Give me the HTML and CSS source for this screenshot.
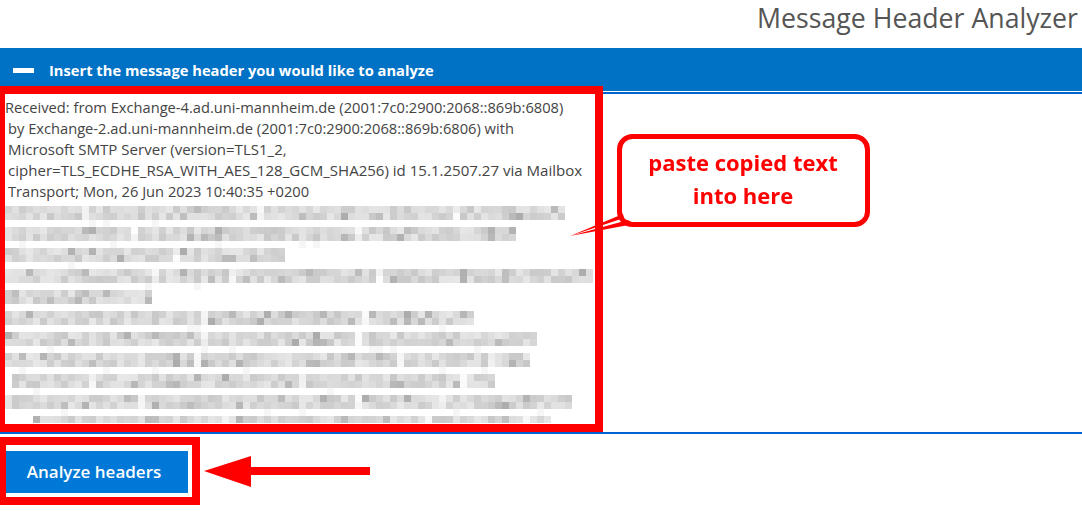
FILE: index.html
```html
<!DOCTYPE html>
<html lang="en">
<head>
<meta charset="utf-8">
<title>Message Header Analyzer</title>
<link rel="stylesheet" href="styles.css">
</head>
<body>
<header class="title-row"><h1 class="title">Message Header Analyzer</h1></header>
<section class="panel">
  <div class="panel-head">
    <span class="minus"></span>
    <span class="panel-title">Insert the message header you would like to analyze</span>
  </div>
  <div class="input-area">
    <div class="header-text">
      <div class="first-line">Received: from Exchange-4.ad.uni-mannheim.de (2001:7c0:2900:2068::869b:6808)</div>
      <div>by Exchange-2.ad.uni-mannheim.de (2001:7c0:2900:2068::869b:6806) with</div>
      <div class="wide-line">Microsoft SMTP Server (version=TLS1_2,</div>
      <div class="wide-line">cipher=TLS_ECDHE_RSA_WITH_AES_128_GCM_SHA256) id 15.1.2507.27 via Mailbox</div>
      <div>Transport; Mon, 26 Jun 2023 10:40:35 +0200</div>
    </div>
    <canvas id="mosaic" class="mosaic" width="595" height="217"></canvas>
  </div>
</section>
<div class="actions"><button class="analyze" type="button">Analyze headers</button></div>

<div class="mark mark-input"></div>
<div class="mark mark-button"></div>

<div class="callout">
  <svg class="callout-shape" width="310" height="110" viewBox="0 0 310 110">
    <rect x="59.500" y="5.500" width="248" height="88" rx="13" ry="13" fill="#fff" stroke="#f00" stroke-width="5"/>
    <path d="M10 105 L63 83 L64 87 Z" fill="#f00"/>
    <path d="M10 105 L68 89 L74 93 Z" fill="#f00"/>
  </svg>
  <div class="callout-text">paste copied text<br>into here</div>
</div>

<svg class="arrow" width="170" height="34" viewBox="0 0 170 34">
  <path d="M0 16 L47 1 V12 H166 V20 H47 V32 Z" fill="#f00"/>
</svg>
<script src="script.js"></script>
</body>
</html>
```

FILE: styles.css
```css
* { box-sizing: border-box; }
html, body { margin: 0; padding: 0; background: #fff; }
body { position: relative; width: 1082px; height: 521px; overflow: hidden; font-family: "Open Sans", "Noto Sans", sans-serif; color: #444; }
.title-row { height: 48px; display: flex; justify-content: flex-end; padding-right: 4px; }
.title { margin: 0; font-size: 26.7px; font-weight: 400; line-height: 36px; color: #555; }
.panel { border-bottom: 2px solid #0063d1; height: 386px; display: flex; flex-direction: column; }
.panel-head { height: 46px; background: #0072c6; border-bottom: 2px solid #0063d1; display: flex; align-items: center; padding: 1px 0 0 13px; gap: 15px; position: relative; }
.panel-head::after { content: ""; position: absolute; left: 0; right: 0; bottom: 0; height: 1px; background: #fff; }
.minus { width: 21px; height: 5px; background: #fff; }
.panel-title { color: #fff; font-size: 14.7px; font-weight: 700; padding-bottom: 2px; }
.input-area { flex: 1; overflow: hidden; padding: 3px 0 0 0; }
.header-text { font-size: 14.68px; line-height: 21px; padding-left: 8px; color: #444; white-space: nowrap; }
.first-line { margin-left: -3px; }
.wide-line { font-size: 15.05px; }
.mosaic { display: block; margin: 4px 0 0 5px; }
.actions { padding: 17px 0 0 6px; }
.analyze { display: block; width: 182px; height: 42px; border: 0; padding: 0 6px 2px 0; background: #0078d7; color: #fff; font-family: inherit; font-size: 17px; font-weight: 600; }
.mark { position: absolute; border-style: solid; border-color: #f00; background: transparent; }
.mark-input { left: 0; top: 86px; width: 603px; height: 346px; border-width: 8px 8px 8px 5px; }
.mark-button { left: 0; top: 437px; width: 200px; height: 68px; border-width: 8px 8px 8px 6px; }
.callout { position: absolute; left: 560px; top: 131px; width: 310px; height: 110px; }
.callout-shape { display: block; }
.callout-text { position: absolute; left: 60px; right: 4px; top: 15px; text-align: center; color: #f00; font-size: 22px; line-height: 33px; font-weight: 700; }
.arrow { position: absolute; left: 204px; top: 455px; }
```

FILE: script.js
```js
(function () {
  var canvas = document.getElementById('mosaic');
  var ctx = canvas.getContext('2d');
  var size = 7;
  var rows = [
    [0, 560], [0, 511], [0, 280], [0, 588], [0, 147], [0, 469],
    [0, 532], [0, 525], [7, 490], [0, 567], [28, 546]
  ];
  var seed = 4217;
  function rnd() {
    seed = (seed * 16807) % 2147483647;
    return seed / 2147483647;
  }
  rows.forEach(function (row, r) {
    var top = r * 21;
    var gapEvery = 12 + Math.floor(rnd() * 20);
    var count = 0;
    for (var x = row[0]; x < row[1]; x += size) {
      count++;
      var isGap = count >= gapEvery;
      if (isGap) { count = 0; gapEvery = 10 + Math.floor(rnd() * 24); }
      for (var l = 0; l < 2; l++) {
        var v = rnd();
        var grey = 200 + Math.floor(rnd() * 32);
        if (v > 0.92) { grey = 172 + Math.floor(rnd() * 20); }
        if (isGap) { grey = 236 + Math.floor(rnd() * 18); }
        ctx.fillStyle = 'rgb(' + grey + ',' + grey + ',' + grey + ')';
        ctx.fillRect(x, top + l * 7, size, size);
      }
      if (rnd() > 0.95) {
        ctx.fillStyle = '#f6f6f6';
        ctx.fillRect(x, top + 14, size, size);
      }
    }
  });
}());
```
